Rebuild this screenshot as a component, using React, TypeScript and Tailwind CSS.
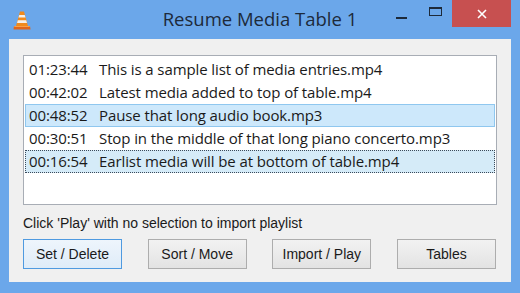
import React from 'react';

const ENTRIES = [
  { time: '01:23:44', name: 'This is a sample list of media entries.mp4', state: 'none' },
  { time: '00:42:02', name: 'Latest media added to top of table.mp4', state: 'none' },
  { time: '00:48:52', name: 'Pause that long audio book.mp3', state: 'selected' },
  { time: '00:30:51', name: 'Stop in the middle of that long piano concerto.mp3', state: 'none' },
  { time: '00:16:54', name: 'Earlist media will be at bottom of table.mp4', state: 'focused' },
];

const BUTTONS = ['Set / Delete', 'Sort / Move', 'Import / Play', 'Tables'];

function VlcIcon() {
  return (
    <svg width="18" height="21" viewBox="0 0 18 21">
      <path d="M7 1.5 L11 1.5 L15 16 L3 16 Z" fill="#f08a1c" />
      <path d="M6.2 5 L11.8 5 L12.5 7.6 L5.5 7.6 Z" fill="#f4f0ea" />
      <path d="M4.8 10.2 L13.2 10.2 L14 13 L4 13 Z" fill="#f4f0ea" />
      <path d="M1 16 L17 16 L17.5 19.5 L0.5 19.5 Z" fill="#e0661a" />
      <path d="M1 16 L17 16 L16.5 17 L1.5 17 Z" fill="#f7a04a" />
    </svg>
  );
}

function TitleBar() {
  return (
    <div className="relative flex h-[39px] shrink-0 items-center">
      <div className="pl-[13px] pt-[1px]">
        <VlcIcon />
      </div>
      <div
        className="absolute left-0 right-0 top-[5px] text-center text-[18.5px] text-[#1d2a3a]"
        style={{ fontFamily: '"Open Sans", "Noto Sans", sans-serif' }}
      >
        Resume Media Table 1
      </div>
      <div className="ml-auto flex h-full items-start">
        <div className="flex h-[27px] w-[34px] items-center justify-center">
          <span className="mt-[9px] block h-[2px] w-[11px] bg-[#1d2a3a]" />
        </div>
        <div className="flex h-[27px] w-[34px] items-center justify-center">
          <span className="mb-[5px] block h-[9px] w-[13px] border-[1.5px] border-t-[2px] border-[#1d2a3a]" />
        </div>
        <div className="mr-[9px] flex h-[27px] w-[59px] items-center justify-center bg-[#c75050]">
          <svg width="10" height="10" viewBox="0 0 10 10">
            <path d="M1 1 L9 9 M9 1 L1 9" stroke="#ffffff" strokeWidth="1.6" />
          </svg>
        </div>
      </div>
    </div>
  );
}

function MediaList() {
  return (
    <div className="h-[150px] border border-[#a8adb5] bg-white px-[1px] pt-[2px]">
      {ENTRIES.map((e) => (
        <div
          key={e.time}
          className={
            'flex h-[23px] items-center pl-[3px] text-[15px] tracking-[-0.1px] text-[#1a1a1a] ' +
            (e.state === 'selected'
              ? 'border border-[#8fc7ef] bg-[#cde8fb]'
              : e.state === 'focused'
                ? 'border border-dotted border-[#3c4a5a] bg-[#d5ebf8]'
                : 'border border-transparent')
          }
          style={{ fontFamily: '"Open Sans", "Noto Sans", sans-serif' }}
        >
          <span className="w-[70px] shrink-0">{e.time}</span>
          <span>{e.name}</span>
        </div>
      ))}
    </div>
  );
}

export default function App() {
  return (
    <div className="flex h-[293px] w-[520px] flex-col bg-[#6ba7ea]">
      <TitleBar />
      <div
        className="mx-[9px] mb-[11px] flex flex-1 flex-col bg-[#f0f0f0] px-[14px] pt-[16px]"
        style={{ fontFamily: '"Liberation Sans", Arial, sans-serif' }}
      >
        <MediaList />
        <div className="mt-[8px] text-[14px] leading-[20px] text-[#1a1a1a]">
          Click 'Play' with no selection to import playlist
        </div>
        <div className="mt-[6px] flex justify-between pr-[1px]">
          {BUTTONS.map((b, i) => (
            <button
              key={b}
              className={
                'h-[30px] w-[99px] text-[14px] text-[#1a1a1a] ' +
                (i === 0
                  ? 'border border-[#4f9ae0] bg-gradient-to-b from-[#eef5fc] to-[#dfecf8]'
                  : 'border border-[#adadad] bg-gradient-to-b from-[#f2f2f2] to-[#e3e3e3]')
              }
            >
              {b}
            </button>
          ))}
        </div>
      </div>
    </div>
  );
}
